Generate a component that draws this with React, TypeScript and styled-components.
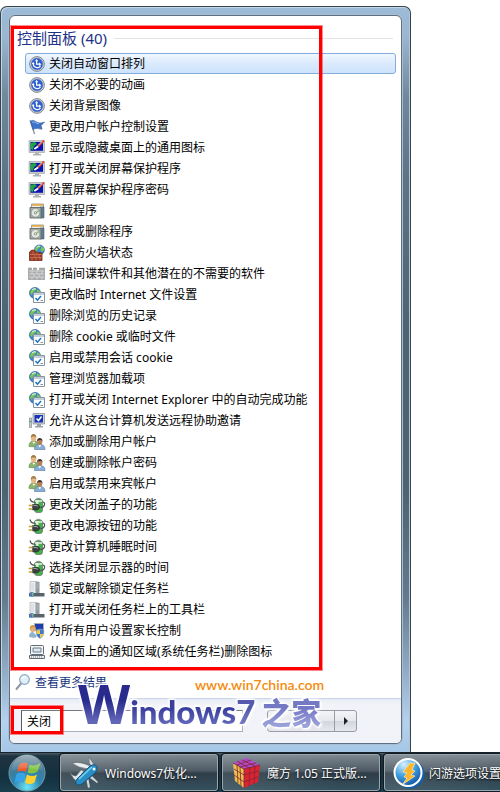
import React from 'react';
import styled, { createGlobalStyle } from 'styled-components';

const GlobalStyle = createGlobalStyle`
  * { box-sizing: border-box; }
  body {
    margin: 0;
    background: #fff;
    color: #000;
    font-family: "Noto Sans", "Noto Sans CJK SC", sans-serif;
    font-size: 12px;
    overflow: hidden;
  }
  button, input { font: inherit; color: inherit; }
`;

const Desktop = styled.div`
  display: flex;
  flex-direction: column;
  min-height: 100vh;
  padding-top: 6px;
`;

const StartMenu = styled.main`
  width: 100%;
  max-width: 411px;
  flex: 1;
  display: flex;
  padding: 8px;
  border: 1px solid #35454f;
  border-bottom: 0;
  border-radius: 7px 7px 0 0;
  background: linear-gradient(#9dbbd7 0, #9ab6d0 30px, #71879b 90px, #5e7384 170px, #4f6472 320px, #4e6370 480px, #64798b 590px, #8fa8c2 660px, #b4d2f0 715px, #a6c6e6 100%);
  box-shadow: inset 1px 1px 0 #c3d6e6, inset -1px 0 0 #b2c5d6;
`;

const MenuPane = styled.div`
  flex: 1;
  min-width: 0;
  display: flex;
  flex-direction: column;
  position: relative;
  border: 1px solid #5d7082;
  border-radius: 6px;
  background: #fff;
  box-shadow: 0 0 0 1px #a9bdd0;
`;

const Results = styled.section`
  flex: 1;
  position: relative;
  padding: 10px 5px 9px 15px;
`;

const GroupHeader = styled.div`
  display: flex;
  align-items: center;
  gap: 7px;
  height: 24px;
  margin: 0 3px 3px -8px;
`;

const GroupTitle = styled.h1`
  margin: 0;
  font-size: 15px;
  font-weight: 400;
  line-height: 24px;
  color: #1f3287;
  white-space: nowrap;
`;

const Rule = styled.span`
  flex: 1;
  height: 1px;
  background: #e2e4e8;
`;

const ResultList = styled.ul`
  margin: 0;
  padding: 0;
  list-style: none;
`;

const ResultButton = styled.button<{ $selected?: boolean }>`
  display: flex;
  align-items: center;
  gap: 4px;
  width: 100%;
  height: 21px;
  padding: 0 3px;
  border: 1px solid ${p => (p.$selected ? '#84acdd' : 'transparent')};
  border-radius: 3px;
  background: ${p => (p.$selected ? 'linear-gradient(#f1f7ff, #dcebfd 45%, #cde3fd)' : 'transparent')};
  line-height: 19px;
  text-align: left;
  white-space: nowrap;
`;

const Icon = styled.svg`
  flex: none;
  width: 16px;
  height: 16px;
  display: block;
  overflow: visible;
`;

const Marker = styled.span`
  position: absolute;
  inset: 10px 79px 1px 1px;
  border: 3px solid #f00;
  box-shadow: 0 0 0 1px rgba(255, 0, 0, .45);
  pointer-events: none;
`;

const MoreLink = styled.a`
  display: flex;
  align-items: center;
  gap: 4px;
  height: 22px;
  margin-bottom: 5px;
  padding-left: 5px;
  color: #17347c;
  text-decoration: none;
`;

const Footer = styled.footer`
  display: flex;
  align-items: center;
  gap: 24px;
  height: 45px;
  padding-left: 11px;
  border-top: 1px solid #c8d5e8;
  border-radius: 0 0 5px 5px;
  background: linear-gradient(#e6ecf5, #f1f3f8 5px);
`;

const SearchField = styled.label`
  position: relative;
  display: flex;
`;

const SearchInput = styled.input`
  width: 222px;
  height: 22px;
  padding: 0 5px;
  border: 1px solid #a9b0ba;
  border-top-color: #73797f;
  border-left-color: #565c63;
  border-radius: 0;
  background: #fff;
  outline: 0;
`;

const SearchMarker = styled(Marker)`
  inset: -4px auto auto -10px;
  width: 52px;
  height: 28px;
`;

const SplitButton = styled.div`
  display: flex;
  height: 22px;
  border: 1px solid #979ca6;
  border-radius: 3px;
  background: linear-gradient(#f4f5f7, #e6e8ec 48%, #d2d6dd 52%, #e6e8ee);
`;

const PowerButton = styled.button`
  width: 66px;
  padding: 0;
  border: 0;
  background: none;
`;

const ArrowButton = styled.button`
  display: grid;
  place-items: center;
  width: 22px;
  padding: 0;
  border: 0;
  border-left: 1px solid #979ca6;
  background: none;
`;

const Watermark = styled.div`
  position: absolute;
  left: 68px;
  bottom: 13px;
  display: flex;
  flex-direction: column;
  align-items: flex-start;
  pointer-events: none;
`;

const SiteAddress = styled.span`
  margin: 0 0 -16px 117px;
  font: 600 14px/16px Lato, sans-serif;
  color: #f58a0b;
`;

const Brand = styled.div`
  display: flex;
  align-items: baseline;
  height: 53px;
  line-height: 52px;
  white-space: nowrap;
  filter: drop-shadow(1px 1px 0 #fff) drop-shadow(-1px -1px 0 #fff) drop-shadow(0 0 1px #fff) drop-shadow(0 0 1px #fff);
`;

const BrandPart = styled.span<{ $size: number; $from: string; $to: string }>`
  font-family: Lato, sans-serif;
  font-size: ${p => p.$size}px;
  font-weight: 900;
  color: transparent;
  background: linear-gradient(${p => p.$from} 45%, ${p => p.$to} 85%);
  background-clip: text;
`;

const BrandInitial = styled(BrandPart)`
  font-family: "Open Sans", sans-serif;
  font-weight: 700;
`;

const BrandHan = styled(BrandPart)`
  margin-left: 6px;
  font-family: "Noto Sans CJK SC", sans-serif;
`;

const Taskbar = styled.nav`
  display: flex;
  gap: 4px;
  height: 40px;
  padding: 1px 0 1px 8px;
  border-top: 1px solid #17222b;
  background: linear-gradient(#4b5c67, #1f3340 3px, #14303f 60%, #1a3f4e);
  overflow: hidden;
`;

const StartButton = styled.button`
  flex: none;
  width: 48px;
  padding: 0;
  border: 0;
  background: none;
`;

const StartOrb = styled.svg`
  display: block;
  width: 38px;
  height: 38px;
`;

const TaskButton = styled.button`
  flex: none;
  display: flex;
  align-items: center;
  gap: 5px;
  width: 158px;
  padding: 0 6px 0 7px;
  border: 1px solid #9aa5ad;
  border-radius: 3px;
  background: linear-gradient(100deg, rgba(255, 255, 255, .1), rgba(255, 255, 255, 0) 75%), linear-gradient(#7c878f, #4d5a64 45%, #2f3d48 52%, #34515e);
  box-shadow: 0 0 0 1px #101b22;
  color: #fff;
  text-shadow: 0 1px 2px #000;
  white-space: nowrap;
`;

const TaskIcon = styled.svg`
  flex: none;
  width: 32px;
  height: 32px;
  overflow: visible;
`;

type IconName =
  | 'ease' | 'flag' | 'display' | 'program' | 'firewall' | 'defender' | 'internet'
  | 'remote' | 'users' | 'power' | 'taskbar' | 'family' | 'tray';

const Globe = () => (
  <>
    <circle cx="6" cy="6" r="5.5" fill="#3d86cf" stroke="#2a5c9a" strokeWidth=".7" />
    <path d="M2 3 5 1l2 1-1 2-2 1-1 3-2-2zM8 2l3 2v3L9 8 7 6l1-2z" fill="#7ac84c" />
    <path d="M3 3q2-2 4-1" stroke="#e8f8ff" fill="none" />
  </>
);

const glyphs: Record<IconName, React.ReactNode> = {
  ease: (
    <>
      <circle cx="8" cy="8" r="7.4" fill="#d3d5d9" stroke="#7b8088" strokeWidth=".9" />
      <circle cx="8" cy="8" r="5.9" fill="#2d5fd0" stroke="#6f85b5" strokeWidth=".6" />
      <path d="M4.2 7.5a4 4 0 0 0 7.4 2.2" stroke="#fff" strokeWidth="1.2" fill="none" />
      <path d="M7.6 4v4.2h3" stroke="#fff" strokeWidth="1.2" fill="none" />
      <path d="m10 6.4 2.4 1.8-2.4 1.8zM6 5.2 7.6 3l1.6 2.2zM2.9 8l1.2-2.2L5.6 8z" fill="#fff" />
    </>
  ),
  flag: (
    <>
      <path d="m1 1 4.5 14" stroke="#8b97a5" strokeWidth="1.3" />
      <path d="M1.5 2.5C4 0 6 2.5 8.5 3.5s4 .5 7-.5L12 6.5l1 3.5c-3 .5-4-2-9 .5z" fill="#3f73c9" stroke="#315a9d" strokeWidth=".7" />
      <path d="M3 3.2c2-1 4 1.3 7 1.6" stroke="#91b8ee" fill="none" />
    </>
  ),
  display: (
    <>
      <path d="M0 .5h15.5v12H0z" fill="#c9ccce" stroke="#9b9fa3" strokeWidth=".6" />
      <path d="M1.5 2H14v8.8H1.5z" fill="#0a16ae" />
      <path d="M1.5 3 6 2l2 2-3 2-1 4-2.5-1z" fill="#20a83e" />
      <path d="m6 8.5 3-2" stroke="#fff" strokeWidth="2" strokeLinecap="round" />
      <path d="m9 6.5 6-6" stroke="#e04534" strokeWidth="1.8" />
      <path d="m9 5.5 4-4" stroke="#fff" strokeWidth=".7" />
      <path d="M6 12.5h4V14h2v1.5H4V14h2z" fill="#aeb1b4" />
    </>
  ),
  program: (
    <>
      <path d="M2.5 1h12v6h-12z" fill="#eceeee" stroke="#8a8e8f" strokeWidth=".8" />
      <path d="M3 1h11v1.8H3z" fill="#e2ad4c" />
      <path d="M11 4h4v11h-4z" fill="#5b7f93" stroke="#43606f" strokeWidth=".6" />
      <path d="M1 4.5h11V15H1z" fill="#a6aba8" stroke="#636966" strokeWidth=".9" />
      <circle cx="6.5" cy="9.8" r="4.3" fill="#e3e7e2" stroke="#868e86" strokeWidth=".6" />
      <path d="m6.5 9.8 3-3.2 1.2 2.4z" fill="#8fc283" />
      <circle cx="6.5" cy="9.8" r="1.1" fill="#fff" stroke="#636966" strokeWidth=".7" />
    </>
  ),
  firewall: (
    <>
      <g transform="translate(5 -.5) scale(.9)"><Globe /></g>
      <path d="M.5 7 3 5l3 .5 2 2 5 .5v7.5H.5z" fill="#9e3d27" stroke="#6b2415" strokeWidth=".8" />
      <path d="M1 9.5h12M1 12.5h12M4 6.5v3m4-2v2M6 9.5v3m4-3v3M3 12.5v3m4-3v3m4-3v3" stroke="#d08063" strokeWidth=".7" />
    </>
  ),
  defender: (
    <>
      <path d="M-.5 2h3v2.5h2V2h3v2.5h3V2h2v2.5h1V2h2v11.5h-16z" fill="#a9abac" stroke="#8a8e8f" strokeWidth=".6" />
      <path d="M0 5h15M0 8h15M0 11h15M3 5v3m5-3v3m5-3v3M5 8v3m5-3v3M3 11v2.5m5-2.5v2.5m5-2.5v2.5" stroke="#dedfdf" strokeWidth=".8" />
    </>
  ),
  internet: (
    <>
      <Globe />
      <path d="M4.5 5.5h11v10h-11z" fill="#fff" stroke="#8794a0" />
      <path d="M5 6h10v2H5z" fill="#c3d0db" />
      <path d="m6.5 11 2 2.2L12 9" stroke="#1b72c6" strokeWidth="1.5" fill="none" />
      <path d="M11.5 13.5H14" stroke="#8794a0" />
    </>
  ),
  remote: (
    <>
      <path d="M.5 5h2v9.5h-2z" fill="#c3c8cc" stroke="#858c93" strokeWidth=".7" />
      <path d="M.5 8.5h2" stroke="#3aa34a" />
      <path d="M4 .5h11.5V11H4z" fill="#cfd3d7" stroke="#81888f" strokeWidth=".7" />
      <path d="M5.5 2H14v7.5H5.5z" fill="#1735b4" />
      <path d="m7.5 5.5 2 2 3-4" stroke="#fff" strokeWidth="1.5" fill="none" />
      <path d="M8 11h4v2h2v1.5H6V13h2z" fill="#9ca2a7" />
    </>
  ),
  users: (
    <>
      <path d="M0 12.5c0-4 2-5.5 5-5.5s4 1.5 4 4L7.5 13z" fill="#8ab56c" stroke="#5f8449" strokeWidth=".6" />
      <ellipse cx="4.6" cy="4.2" rx="2.6" ry="3.5" fill="#e3b988" />
      <path d="M1.9 4.2C1-1.2 8-1.2 7.3 4L6.4 2.4 3 2.6z" fill="#a07c43" />
      <path d="m3.5 8 1.3 2L6.2 8z" fill="#fff" />
      <path d="M5.5 15.5c0-4 2-5 5-5s5.5 1 5.5 5z" fill="#86aed6" stroke="#5379a0" strokeWidth=".6" />
      <ellipse cx="10.8" cy="7.8" rx="2.5" ry="3.3" fill="#b3815a" />
      <path d="M8.2 7.8c-1-5 6-5 5.2 0l-.9-1.7-3.4.1z" fill="#43332a" />
      <path d="m9.3 11.2 1.5 2.3 1.5-2.3z" fill="#fff" />
    </>
  ),
  power: (
    <>
      <path d="M7.5.8h4v2h-4z" fill="#a5aca6" />
      <rect x="5.5" y="2" width="8" height="13.5" rx="2.5" fill="#46b04a" stroke="#6b7d6c" strokeWidth=".8" />
      <path d="M7 3h2.5v4H7z" fill="#dcf3d7" />
      <path d="M6 3h7v2H6z" fill="#e5eee4" opacity=".8" />
      <path d="M1 1.5c1 3.5 3 4 5 3.5M13.5 5c3.5 0 2.5 6-2 5.5" stroke="#4a4f52" strokeWidth="1.2" fill="none" />
      <path d="M3.5 7.5h2c3-1 5 .5 5.5 2.5-.5 2-2.500 3.500-5.500 3h-2z" fill="#3b4043" stroke="#1d2021" strokeWidth=".5" />
      <path d="M-.3 8.500h3.800M-.3 12h3.800" stroke="#c79d36" strokeWidth="1.400" />
      <path d="M4.500 8.700c2-.7 3.500 0 4.500.8" stroke="#a6abad" fill="none" />
    </>
  ),
  taskbar: (
    <>
      <path d="M1 .5h7v12H1z" fill="#eceef0" stroke="#b0b5ba" strokeWidth=".7" />
      <path d="M6.5 .8h4V12h-4z" fill="#929ba2" />
      <path d="M2 3h3M2 5h3M2 7h3M2 9h3M7.500 3h2M7.500 5h2M7.500 7h2" stroke="#c5ced5" strokeWidth=".8" />
      <path d="M0 12h15.500v3.500H0z" fill="#58636b" />
      <circle cx="2.800" cy="13.300" r="2.400" fill="#2b80cc" />
      <path d="M1.300 12h1.300v1.200H1.300z" fill="#eb6434" />
      <path d="M3 12h1.300v1.200H3z" fill="#8acd4d" />
      <path d="M3 13.500h1.300v1H3z" fill="#f3c945" />
    </>
  ),
  family: (
    <>
      <path d="M5.500 .5h9v7h-9z" fill="#1e3eae" stroke="#a8afbb" />
      <path d="M0 14c0-4 2-5 4-5l4 4-2 2z" fill="#90b2cc" />
      <circle cx="3.800" cy="6" r="3" fill="#e0b07b" />
      <path d="M1 6c-1-5 6-5 5.500-1L4 4z" fill="#d49a34" />
      <path d="m11 6 4 1c0 5-1 7-4 8.500C8 14 7 12 7 7z" fill="#3b7bcc" stroke="#b0b8c4" strokeWidth=".6" />
      <path d="M11 7v4H7.700L7.500 7.500zM11 11h3.500c-.5 2-2 3-3.500 4z" fill="#f3c945" />
    </>
  ),
  tray: (
    <>
      <rect x="1.500" y="1.500" width="13" height="9" rx="1" fill="#f1f4f6" stroke="#606d77" />
      <path d="M4 4h8v4H4z" fill="#dbe6ef" stroke="#6f7d88" />
      <path d="M.5 11.500h15v3H.5z" fill="#f1f4f6" stroke="#606d77" />
      <path d="M2 13h12" stroke="#606d77" strokeDasharray="1 1" />
    </>
  ),
};

const results: { icon: IconName; label: string }[] = [
  { icon: 'ease', label: '关闭自动窗口排列' },
  { icon: 'ease', label: '关闭不必要的动画' },
  { icon: 'ease', label: '关闭背景图像' },
  { icon: 'flag', label: '更改用户帐户控制设置' },
  { icon: 'display', label: '显示或隐藏桌面上的通用图标' },
  { icon: 'display', label: '打开或关闭屏幕保护程序' },
  { icon: 'display', label: '设置屏幕保护程序密码' },
  { icon: 'program', label: '卸载程序' },
  { icon: 'program', label: '更改或删除程序' },
  { icon: 'firewall', label: '检查防火墙状态' },
  { icon: 'defender', label: '扫描间谍软件和其他潜在的不需要的软件' },
  { icon: 'internet', label: '更改临时 Internet 文件设置' },
  { icon: 'internet', label: '删除浏览的历史记录' },
  { icon: 'internet', label: '删除 cookie 或临时文件' },
  { icon: 'internet', label: '启用或禁用会话 cookie' },
  { icon: 'internet', label: '管理浏览器加载项' },
  { icon: 'internet', label: '打开或关闭 Internet Explorer 中的自动完成功能' },
  { icon: 'remote', label: '允许从这台计算机发送远程协助邀请' },
  { icon: 'users', label: '添加或删除用户帐户' },
  { icon: 'users', label: '创建或删除帐户密码' },
  { icon: 'users', label: '启用或禁用来宾帐户' },
  { icon: 'power', label: '更改关闭盖子的功能' },
  { icon: 'power', label: '更改电源按钮的功能' },
  { icon: 'power', label: '更改计算机睡眠时间' },
  { icon: 'power', label: '选择关闭显示器的时间' },
  { icon: 'taskbar', label: '锁定或解除锁定任务栏' },
  { icon: 'taskbar', label: '打开或关闭任务栏上的工具栏' },
  { icon: 'family', label: '为所有用户设置家长控制' },
  { icon: 'tray', label: '从桌面上的通知区域(系统任务栏)删除图标' },
];

const Orb = () => (
  <StartOrb viewBox="0 0 38 38" aria-hidden="true">
    <defs>
      <radialGradient id="orb" cx=".5" cy=".9" r=".85">
        <stop offset="0" stopColor="#6fe6f5" />
        <stop offset=".45" stopColor="#2c86b4" />
        <stop offset="1" stopColor="#55707f" />
      </radialGradient>
      <linearGradient id="orbGloss" x2="0" y2="1">
        <stop stopColor="#fff" stopOpacity=".75" />
        <stop offset="1" stopColor="#fff" stopOpacity=".1" />
      </linearGradient>
    </defs>
    <circle cx="19" cy="19" r="18" fill="url(#orb)" stroke="#6f9fae" />
    <path d="M11 11q4-4 9-1.500L18 18q-4-2.500-9 0z" fill="#ee5a2b" />
    <path d="M21.500 10.500q5 2.500 11-1.500L29.500 17.500q-5 3.500-10 1z" fill="#83c341" />
    <path d="M8.500 20q4.500-2.500 9 0l-2 8.500q-4-2.500-9 0z" fill="#35a4e6" />
    <path d="M19 20.500q5 3 10 0l-2.500 8q-5 3-9.500 0z" fill="#fcd12f" />
    <path d="M3 17a16 16 0 0 1 32 0q-16-6-32 0z" fill="url(#orbGloss)" opacity=".6" />
  </StartOrb>
);

const KnifeIcon = () => (
  <TaskIcon viewBox="0 0 32 32" aria-hidden="true">
    <path d="M4 6q8-2 18 3l-2 3Q10 11 4 6z" fill="#e9edef" stroke="#59636b" strokeWidth=".6" />
    <path d="m21 0 6 9-3 2q-4-5-3-11z" fill="#d6dcdf" stroke="#59636b" strokeWidth=".6" />
    <path d="M2 15q2 4 6 4l5-6 3 1-5 7-1 5Q4 21 2 15z" fill="#dfe4e7" stroke="#59636b" strokeWidth=".6" />
    <path d="m20 20 2 10-2 1-2-10zM24 19l6 6-1 1-7-5z" fill="#cfd6da" />
    <path d="m9 22 13-13q5-3 7 1 1 3-2 6L14 27q-4 2-6 0-1-3 1-5z" fill="#278fc4" stroke="#12547e" />
    <path d="m11 22 13-12" stroke="#7dd1f1" strokeWidth="1.500" />
    <circle cx="26" cy="12" r="1.500" fill="#eff5f8" />
  </TaskIcon>
);

const CubeIcon = () => (
  <TaskIcon viewBox="0 0 32 32" aria-hidden="true">
    <path d="m3 6 11 6v19L5 24z" fill="#edc04b" />
    <path d="m14 12 16-4-2 17-14 6z" fill="#dc2430" />
    <path d="m3 6 14-5 13 7-16 4z" fill="#b44bc6" />
    <path d="m3 6 11 6 16-4M4 12l10 6 15-4M4 18l10 7 14-5M7 8l1 18M10 10l1 19M14 12v19M20 10l-1 19M25 9l-1 18M7 4l12 7M12 3l13 6M7 8l14-5M10 10l16-4" stroke="#7d2338" strokeWidth=".8" fill="none" />
  </TaskIcon>
);

const BoltIcon = () => (
  <TaskIcon viewBox="0 0 32 32" aria-hidden="true">
    <defs>
      <radialGradient id="bolt" cx=".35" cy=".2" r=".9">
        <stop stopColor="#d8f2ff" />
        <stop offset=".5" stopColor="#3e9de0" />
        <stop offset="1" stopColor="#0a4798" />
      </radialGradient>
    </defs>
    <circle cx="18" cy="17" r="14.500" fill="#155da9" />
    <circle cx="16" cy="15.500" r="13.500" fill="url(#bolt)" stroke="#fff" strokeWidth="2" />
    <path d="m18 6-7 9 4 1-3 4 3 1-5 7 13-9-4-1 4-4-3-1 3-7z" fill="#ffb52c" stroke="#fff3cf" strokeWidth=".6" />
  </TaskIcon>
);

const tasks = [
  { label: 'Windows7优化...', icon: <KnifeIcon /> },
  { label: '魔方 1.05 正式版...', icon: <CubeIcon /> },
  { label: '闪游选项设置', icon: <BoltIcon /> },
];

export default function App() {
  return (
    <>
      <GlobalStyle />
      <Desktop>
        <StartMenu>
          <MenuPane>
            <Results>
              <GroupHeader>
                <GroupTitle>控制面板 (40)</GroupTitle>
                <Rule />
              </GroupHeader>
              <ResultList>
                {results.map((item, index) => (
                  <li key={item.label}>
                    <ResultButton type="button" $selected={index === 0}>
                      <Icon viewBox="0 0 16 16" aria-hidden="true">{glyphs[item.icon]}</Icon>
                      {item.label}
                    </ResultButton>
                  </li>
                ))}
              </ResultList>
              <Marker />
            </Results>
            <MoreLink href="#more">
              <Icon viewBox="0 0 16 16" aria-hidden="true">
                <path d="m1.500 15 5-6" stroke="#8d98a5" strokeWidth="2" strokeLinecap="round" />
                <circle cx="9.500" cy="5.500" r="4.800" fill="#dff0fb" stroke="#8ca6be" strokeWidth="1.200" />
                <path d="M7 5q1-3 4-2" stroke="#fff" strokeWidth="1.300" fill="none" />
              </Icon>
              查看更多结果
            </MoreLink>
            <Footer>
              <SearchField>
                <SearchInput type="text" aria-label="搜索" defaultValue="关闭" />
                <SearchMarker />
              </SearchField>
              <SplitButton>
                <PowerButton type="button" aria-label="关机" />
                <ArrowButton type="button" aria-label="更多选项">
                  <svg width="6" height="8" viewBox="0 0 6 8" aria-hidden="true">
                    <path d="m1 0 4 4-4 4z" fill="#202226" />
                  </svg>
                </ArrowButton>
              </SplitButton>
            </Footer>
            <Watermark>
              <SiteAddress>www.win7china.com</SiteAddress>
              <Brand>
                <BrandInitial $size={54} $from="#282b8d" $to="#6166b8">W</BrandInitial>
                <BrandPart $size={33} $from="#3a3f9e" $to="#7076c2">indows</BrandPart>
                <BrandPart $size={33} $from="#5559b0" $to="#8086cc">7</BrandPart>
                <BrandHan $size={30} $from="#7479c4" $to="#a3aade">之家</BrandHan>
              </Brand>
            </Watermark>
          </MenuPane>
        </StartMenu>
        <Taskbar>
          <StartButton type="button" aria-label="开始"><Orb /></StartButton>
          {tasks.map(task => (
            <TaskButton type="button" key={task.label}>
              {task.icon}
              {task.label}
            </TaskButton>
          ))}
        </Taskbar>
      </Desktop>
    </>
  );
}
